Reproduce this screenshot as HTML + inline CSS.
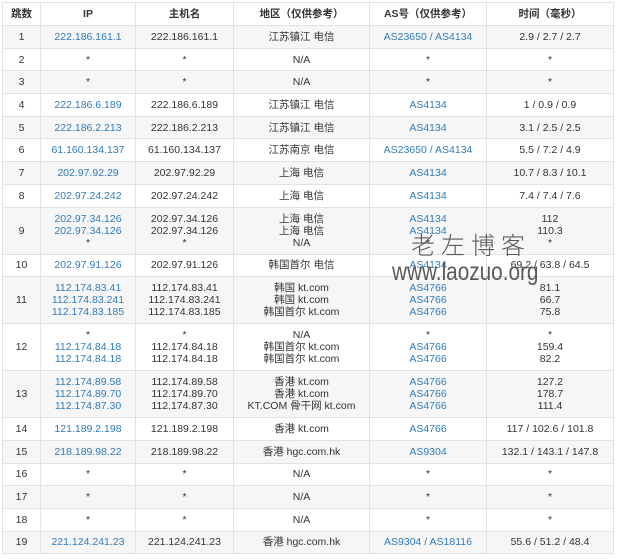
<!DOCTYPE html><html><head><meta charset="utf-8"><style>
body{margin:0;background:#fff;width:618px;height:559px;overflow:hidden;position:relative;font-family:"Liberation Sans","Noto Sans CJK SC",sans-serif;font-size:10.5px;color:#333}
table{position:absolute;left:2px;top:2px;border-collapse:collapse;table-layout:fixed;width:611px}
td,th{border:1px solid #e2e2e2;text-align:center;padding:0;line-height:12px;vertical-align:middle}
th{height:22px;font-weight:bold;font-size:10.5px}
tr.s td{height:21.7px}
tr.t td{height:46px}
tr:nth-child(even) td{background:#f6f6f6}
.b{color:#2f7bbd}
.wm1{position:absolute;left:411px;top:229px;font-size:24px;line-height:30px;color:#5a5a5a;letter-spacing:6px;font-family:"Noto Sans CJK SC",sans-serif;font-weight:300}
.wm2{position:absolute;left:392px;top:257px;font-size:25px;line-height:30px;color:#5a5a5a;font-family:"Liberation Sans",sans-serif;transform:scaleX(0.83);transform-origin:0 0;white-space:nowrap}
</style></head><body>
<table>
<colgroup><col style="width:38px"><col style="width:95px"><col style="width:98px"><col style="width:136px"><col style="width:117px"><col style="width:127px"></colgroup>
<tr><th>跳数</th><th>IP</th><th>主机名</th><th>地区（仅供参考）</th><th>AS号（仅供参考）</th><th>时间（毫秒）</th></tr>
<tr class="s"><td>1</td><td class="b">222.186.161.1</td><td>222.186.161.1</td><td>江苏镇江 电信</td><td class="b">AS23650 / AS4134</td><td>2.9 / 2.7 / 2.7</td></tr>
<tr class="s"><td>2</td><td>*</td><td>*</td><td>N/A</td><td>*</td><td>*</td></tr>
<tr class="s"><td>3</td><td>*</td><td>*</td><td>N/A</td><td>*</td><td>*</td></tr>
<tr class="s"><td>4</td><td class="b">222.186.6.189</td><td>222.186.6.189</td><td>江苏镇江 电信</td><td class="b">AS4134</td><td>1 / 0.9 / 0.9</td></tr>
<tr class="s"><td>5</td><td class="b">222.186.2.213</td><td>222.186.2.213</td><td>江苏镇江 电信</td><td class="b">AS4134</td><td>3.1 / 2.5 / 2.5</td></tr>
<tr class="s"><td>6</td><td class="b">61.160.134.137</td><td>61.160.134.137</td><td>江苏南京 电信</td><td class="b">AS23650 / AS4134</td><td>5.5 / 7.2 / 4.9</td></tr>
<tr class="s"><td>7</td><td class="b">202.97.92.29</td><td>202.97.92.29</td><td>上海 电信</td><td class="b">AS4134</td><td>10.7 / 8.3 / 10.1</td></tr>
<tr class="s"><td>8</td><td class="b">202.97.24.242</td><td>202.97.24.242</td><td>上海 电信</td><td class="b">AS4134</td><td>7.4 / 7.4 / 7.6</td></tr>
<tr class="t"><td>9</td><td class="b">202.97.34.126<br>202.97.34.126<br><span style="color:#333">*</span></td><td>202.97.34.126<br>202.97.34.126<br>*</td><td>上海 电信<br>上海 电信<br>N/A</td><td class="b">AS4134<br>AS4134<br><span style="color:#333">*</span></td><td>112<br>110.3<br>*</td></tr>
<tr class="s"><td>10</td><td class="b">202.97.91.126</td><td>202.97.91.126</td><td>韩国首尔 电信</td><td class="b">AS4134</td><td>69.2 / 63.8 / 64.5</td></tr>
<tr class="t"><td>11</td><td class="b">112.174.83.41<br>112.174.83.241<br>112.174.83.185</td><td>112.174.83.41<br>112.174.83.241<br>112.174.83.185</td><td>韩国 kt.com<br>韩国 kt.com<br>韩国首尔 kt.com</td><td class="b">AS4766<br>AS4766<br>AS4766</td><td>81.1<br>66.7<br>75.8</td></tr>
<tr class="t"><td>12</td><td class="b"><span style="color:#333">*</span><br>112.174.84.18<br>112.174.84.18</td><td>*<br>112.174.84.18<br>112.174.84.18</td><td>N/A<br>韩国首尔 kt.com<br>韩国首尔 kt.com</td><td class="b"><span style="color:#333">*</span><br>AS4766<br>AS4766</td><td>*<br>159.4<br>82.2</td></tr>
<tr class="t"><td>13</td><td class="b">112.174.89.58<br>112.174.89.70<br>112.174.87.30</td><td>112.174.89.58<br>112.174.89.70<br>112.174.87.30</td><td>香港 kt.com<br>香港 kt.com<br>KT.COM 骨干网 kt.com</td><td class="b">AS4766<br>AS4766<br>AS4766</td><td>127.2<br>178.7<br>111.4</td></tr>
<tr class="s"><td>14</td><td class="b">121.189.2.198</td><td>121.189.2.198</td><td>香港 kt.com</td><td class="b">AS4766</td><td>117 / 102.6 / 101.8</td></tr>
<tr class="s"><td>15</td><td class="b">218.189.98.22</td><td>218.189.98.22</td><td>香港 hgc.com.hk</td><td class="b">AS9304</td><td>132.1 / 143.1 / 147.8</td></tr>
<tr class="s"><td>16</td><td>*</td><td>*</td><td>N/A</td><td>*</td><td>*</td></tr>
<tr class="s"><td>17</td><td>*</td><td>*</td><td>N/A</td><td>*</td><td>*</td></tr>
<tr class="s"><td>18</td><td>*</td><td>*</td><td>N/A</td><td>*</td><td>*</td></tr>
<tr class="s"><td>19</td><td class="b">221.124.241.23</td><td>221.124.241.23</td><td>香港 hgc.com.hk</td><td class="b">AS9304 / AS18116</td><td>55.6 / 51.2 / 48.4</td></tr>
</table>
<div class="wm1">老左博客</div>
<div class="wm2">www.laozuo.org</div>
</body></html>
